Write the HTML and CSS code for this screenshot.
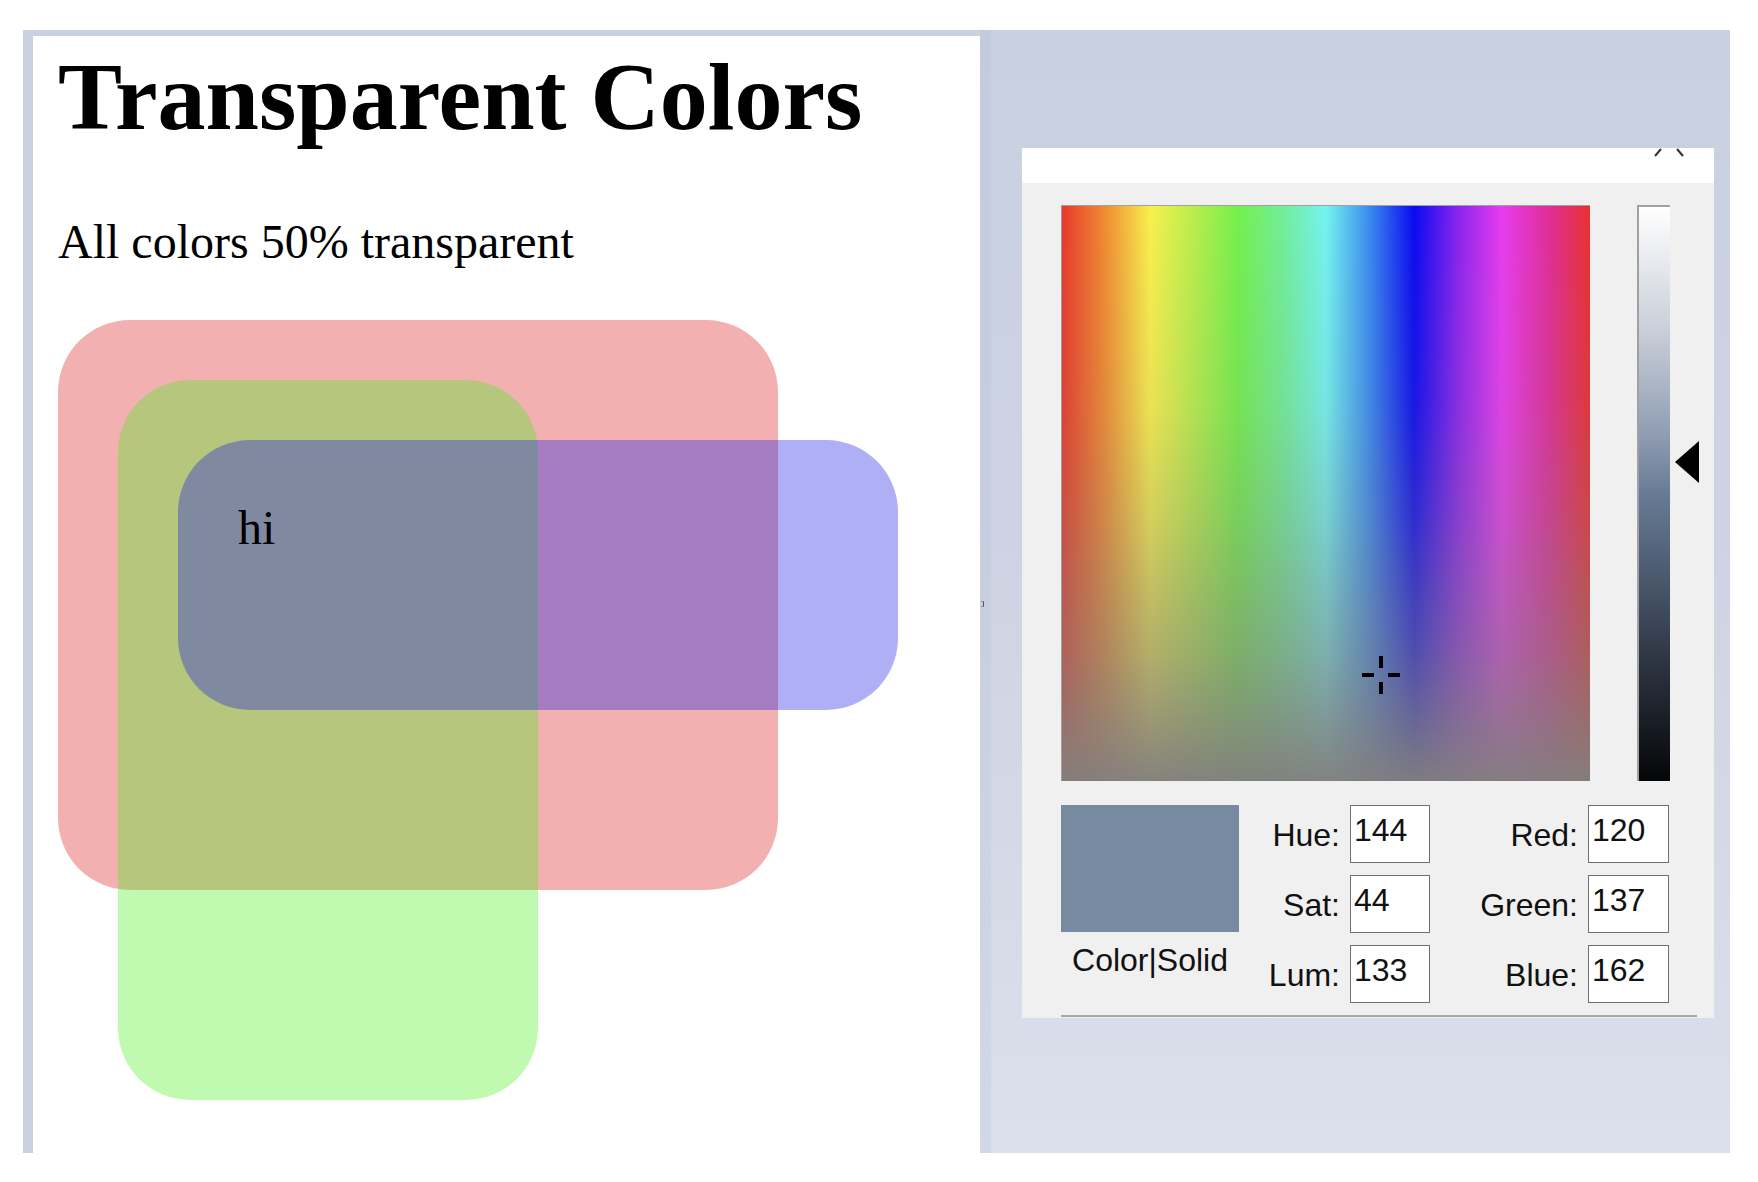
FILE: index.html
```html
<!DOCTYPE html>
<html>
<head>
<meta charset="utf-8">
<title>Transparent Colors</title>
<link rel="stylesheet" href="styles.css">
</head>
<body>
<div class="frame">
  <div class="page">
    <h1 class="title">Transparent Colors</h1>
    <p class="lead">All colors 50% transparent</p>
    <div class="box red">
      <div class="box green">
        <div class="box blue">hi</div>
      </div>
    </div>
  </div>
  <div class="side">
    <span class="tick"></span>
    <div class="dialog">
      <div class="titlebar">
        <svg class="close" width="30" height="9" viewBox="0 0 30 9"><path d="M1 8 L7 1 M23 1 L29 8" stroke="#333" stroke-width="2" fill="none"/></svg>
      </div>
      <div class="body">
        <div class="top">
          <div class="spectrum">
            <svg class="cross" width="38" height="38" viewBox="0 0 38 38">
              <rect x="17" y="0" width="4" height="12" fill="#000"/>
              <rect x="17" y="26" width="4" height="12" fill="#000"/>
              <rect x="0" y="17" width="12" height="4" fill="#000"/>
              <rect x="26" y="17" width="12" height="4" fill="#000"/>
            </svg>
          </div>
          <div class="lumbar"></div>
          <div class="arrowcol">
            <svg width="24" height="42" viewBox="0 0 24 42"><path d="M24 0 L24 42 L0 21 Z" fill="#000"/></svg>
          </div>
        </div>
        <div class="bottom">
          <div class="swatchcol">
            <div class="swatch"></div>
            <div class="swatchlabel">Color|Solid</div>
          </div>
          <div class="fields">
            <div class="lbl">Hue:</div><div class="val">144</div>
            <div class="lbl">Red:</div><div class="val">120</div>
            <div class="lbl">Sat:</div><div class="val">44</div>
            <div class="lbl">Green:</div><div class="val">137</div>
            <div class="lbl">Lum:</div><div class="val">133</div>
            <div class="lbl">Blue:</div><div class="val">162</div>
          </div>
        </div>
        <div class="sep"></div>
      </div>
    </div>
  </div>
</div>
</body>
</html>
```
FILE: styles.css
```css
html, body {
  margin: 0;
  padding: 0;
  background: #ffffff;
}

.frame {
  display: flex;
  margin: 30px 0 0 23px;
  width: 1707px;
  height: 1123px;
  background: #cad1e0;
}

.page {
  box-sizing: border-box;
  width: 947px;
  margin: 6px 0 0 10px;
  padding: 13px 0 0 25px;
  background: #ffffff;
  font-family: "Liberation Serif", "Times New Roman", serif;
  color: #000;
}

.title {
  margin: 0;
  font-size: 96px;
  line-height: 96px;
  font-weight: bold;
  white-space: nowrap;
}

.lead {
  margin: 73px 0 0 0;
  font-size: 48px;
  line-height: 48px;
}

.box {
  box-sizing: border-box;
  padding: 60px;
  border-radius: 72px;
  font-size: 48px;
}

.red {
  margin-top: 54px;
  width: 720px;
  height: 570px;
  background: rgba(218, 29, 32, 0.35);
}

.green {
  width: 420px;
  height: 720px;
  background: rgba(75, 241, 29, 0.35);
}

.blue {
  width: 720px;
  height: 270px;
  background: rgba(24, 26, 226, 0.35);
  line-height: 55px;
}

.side {
  position: relative;
  flex: 1;
  background:
    linear-gradient(to right, rgba(170, 180, 205, 0.18) 0px, rgba(170, 180, 205, 0.18) 10px, rgba(170, 180, 205, 0) 12px),
    linear-gradient(to bottom, #c9d0e0 0%, #cdd3e2 45%, #d6dbe8 80%, #dbe0ec 100%);
  font-family: "Liberation Sans", Arial, sans-serif;
}

.tick {
  position: absolute;
  left: 1px;
  top: 571px;
  width: 3px;
  height: 6px;
  border-right: 1px solid #555;
  border-top: 1px solid #999;
  border-bottom: 1px solid #999;
  box-sizing: border-box;
}

.dialog {
  margin: 118px 0 0 42px;
  width: 692px;
  height: 870px;
  display: flex;
  flex-direction: column;
}

.titlebar {
  height: 35px;
  background: #ffffff;
  display: flex;
  justify-content: flex-end;
  align-items: flex-start;
  padding-right: 30px;
}

.close {
  display: block;
}

.body {
  flex: 1;
  background: #f0f0f0;
  padding: 22px 0 0 39px;
  display: flex;
  flex-direction: column;
}

.top {
  display: flex;
  height: 576px;
}

.spectrum {
  position: relative;
  box-sizing: border-box;
  width: 529px;
  height: 576px;
  border-top: 1px solid #a0a0a0;
  border-left: 1px solid #a0a0a0;
  background:
    linear-gradient(to bottom, rgba(130, 127, 126, 0) 0%, rgba(130, 127, 126, 0.12) 35%, rgba(130, 127, 126, 0.3) 55%, rgba(130, 127, 126, 0.58) 78%, rgba(130, 127, 126, 0.97) 100%),
    linear-gradient(to right, #e8392b 0%, #f08a32 8%, #f8f04e 16.7%, #b8ee4c 25%, #74f04c 33.3%, #72ee9a 42%, #74f3f0 50%, #3c8ef0 58%, #0a0af0 66.7%, #8a24ee 75%, #e83cf0 83.3%, #e02e9a 92%, #e83030 100%);
}

.cross {
  position: absolute;
  left: 300px;
  top: 450px;
}

.lumbar {
  box-sizing: border-box;
  margin-left: 47px;
  width: 33px;
  height: 576px;
  border-top: 2px solid #a0a0a0;
  border-left: 2px solid #a0a0a0;
  background: linear-gradient(to bottom, #ffffff 0%, #c8ced8 22%, #8e9cb2 40%, #687a95 50%, #4a586c 65%, #2c3340 80%, #050608 100%);
}

.arrowcol {
  margin-left: 5px;
  padding-top: 236px;
}

.arrowcol svg {
  display: block;
}

.bottom {
  display: flex;
  margin-top: 24px;
}

.swatchcol {
  width: 178px;
}

.swatch {
  width: 178px;
  height: 127px;
  background: rgb(120, 137, 162);
}

.swatchlabel {
  margin-top: 10px;
  font-size: 32px;
  line-height: 37px;
  color: #111;
  text-align: center;
  white-space: nowrap;
}

.fields {
  display: grid;
  grid-template-columns: 111px 80px 158px 81px;
  grid-auto-rows: 58px;
  row-gap: 12px;
}

.lbl {
  box-sizing: border-box;
  padding: 12px 10px 0 0;
  font-size: 32px;
  line-height: 37px;
  text-align: right;
  color: #111;
  white-space: nowrap;
}

.val {
  box-sizing: border-box;
  border: 1px solid #6f6f6f;
  background: #ffffff;
  padding: 6px 0 0 3px;
  font-size: 32px;
  line-height: 37px;
  color: #111;
}

.sep {
  margin-top: 12px;
  width: 636px;
  height: 2px;
  background: #a8a8a8;
}
```
